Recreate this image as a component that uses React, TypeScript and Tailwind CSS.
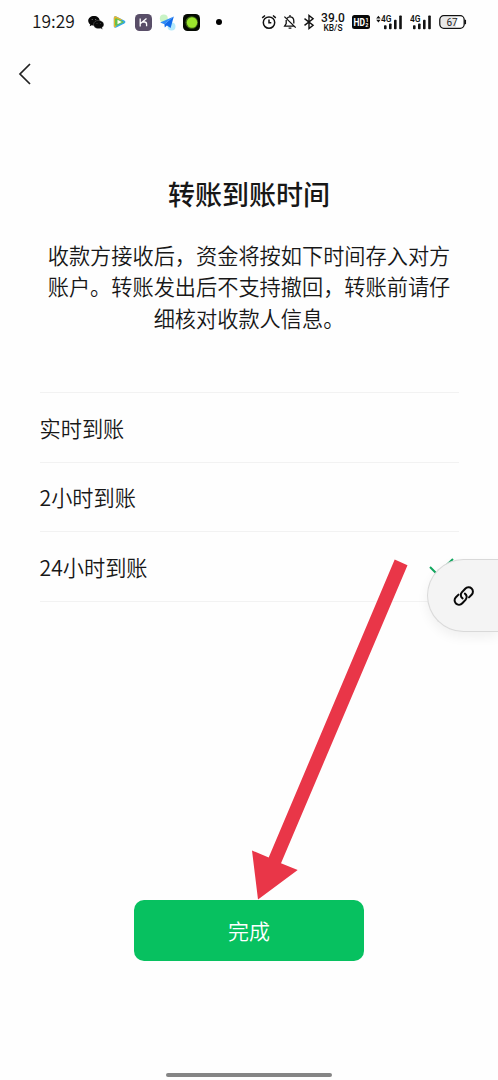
import type { ReactNode } from "react"

const options = ["实时到账", "2小时到账", "24小时到账"]

function SignalBars() {
  return (
    <svg className="h-4 w-[22px]" viewBox="0 0 22 16" fill="#111">
      <text x="0" y="8.2" fontSize="9.2" fontWeight="600" fontFamily="Roboto, sans-serif" textLength="10.5" lengthAdjust="spacingAndGlyphs">
        4G
      </text>
      <rect x="3" y="11.2" width="2.6" height="4" rx="0.8" />
      <rect x="8" y="9.4" width="2.6" height="5.8" rx="0.8" />
      <rect x="13" y="5.8" width="2.6" height="9.4" rx="0.8" />
      <rect x="18.2" y="1.4" width="2.6" height="13.8" rx="0.8" />
    </svg>
  )
}

function WeChatIcon() {
  return (
    <svg className="h-4 w-4" viewBox="0 0 16 16" fill="#080808">
      <path d="M6 2C2.7 2 .2 4.1.2 6.8c0 1.5.8 2.8 2 3.7L1.7 12.3l2-1c.8.2 1.5.3 2.3.3 3.3 0 5.7-2.1 5.7-4.8S9.3 2 6 2z" />
      <path
        d="M10.6 6.4c-2.9 0-5.1 1.8-5.1 4.1s2.2 4.1 5.1 4.1c.7 0 1.3-.1 1.9-.3l1.9.9-.5-1.6c1.2-.8 1.9-1.9 1.9-3.1 0-2.3-2.3-4.1-5.2-4.1z"
        stroke="#aaa"
        strokeWidth="0.3"
      />
      <circle cx="4.2" cy="5.4" r="0.5" fill="#999" />
      <circle cx="7.7" cy="5.4" r="0.5" fill="#999" />
      <circle cx="9" cy="9.4" r="0.4" fill="#888" />
      <circle cx="12.4" cy="9.4" r="0.4" fill="#888" />
    </svg>
  )
}

function VideoIcon() {
  return (
    <svg className="ml-[9px] h-3 w-[13px]" viewBox="0 0 13 12">
      <path d="M.8 2C.8.5 2 0 3.3.5l8 4c1.5.8 1.5 2.2 0 3l-8 4C1.8 12 .8 11.5.8 10z" fill="#35a8e8" />
      <path d="M.8 2C.8.5 2 0 3.3.5L9 3.4 2 11.5C1.2 11.4.8 10.8.8 10z" fill="#e9b52e" />
      <path d="M2 3.5C2 2.6 3 2 4 2.5l6 2.7c.8.5.8 1.1 0 1.6L4 9.6c-1 .4-2 0-2-.9z" fill="#66c04c" />
      <path d="M4.5 3.7L8.7 6 4.5 8.3z" fill="#fff" />
    </svg>
  )
}

function AppIcons() {
  return (
    <>
      <WeChatIcon />
      <VideoIcon />
      <svg className="ml-[9px] h-[17px] w-[17px]" viewBox="0 0 17 17" fill="none">
        <rect width="17" height="17" rx="4.5" fill="#594e68" />
        <path d="M5.2 4.5v8M5.5 9.5L11.5 4.6M7.8 8h1.8c1.5 0 2 1 2 2.2v2" stroke="#fff" strokeWidth="1.3" />
      </svg>
      <svg className="ml-[7px] h-[17px] w-[17px]" viewBox="0 0 17 17">
        <circle cx="4.8" cy="4.5" r="4" fill="#c9f3c5" />
        <circle cx="12.5" cy="12.5" r="4" fill="#b5e9fb" />
        <path d="M14.8 2.5L1.2 8.6l4.2 1.7z" fill="#2c8cf7" />
        <path d="M14.8 2.5L5.4 10.3l.4 3.3 2.1-2 3.7 2.5z" fill="#116bea" />
      </svg>
      <svg className="ml-[7px] h-[17px] w-[17px]" viewBox="0 0 17 17">
        <rect width="17" height="17" rx="4.5" fill="#050a02" />
        <circle cx="8.7" cy="8.5" r="6.3" fill="#416817" />
        <circle cx="9" cy="8.5" r="5.2" fill="#9be52d" />
      </svg>
      <span className="ml-4 h-[6px] w-[6px] rounded-full bg-black" />
    </>
  )
}

function SystemIcons() {
  return (
    <>
      <svg className="h-4 w-4" viewBox="0 0 16 16" fill="none" stroke="#111" strokeWidth="1.5">
        <circle cx="8" cy="8.6" r="5.7" />
        <path d="M8 5.5v3.3h2.3M1.2 3.9L4 1.5M12 1.5l2.8 2.4" />
      </svg>
      <svg className="ml-1.5 h-4 w-[14px]" viewBox="0 0 14 16" fill="none" stroke="#111" strokeWidth="1.3">
        <path d="M4 4.3C4.7 3.3 5.7 2.8 7 2.8c2.5 0 3.8 1.7 3.8 4.2v2.5M3.2 6v3.5L1.6 12.2h9.2M7 1v1.8M5.6 14.2h2.8M1.4 2.6l11.3 11" />
      </svg>
      <svg className="ml-1.5 h-4 w-3" viewBox="0 0 12 16" fill="none" stroke="#111" strokeWidth="1.4">
        <path d="M1.5 4.6l8.6 6.6L6 14.5v-13l4.1 3.3-8.6 6.6" />
      </svg>
      <div className="ml-[6px] flex w-6 flex-col items-center font-['Roboto'] text-[#111]">
        <span className="text-[12px] leading-[10px] font-medium">39.0</span>
        <svg className="mt-px h-[8px] w-5" viewBox="0 0 20 8" fill="#111">
          <text x="0.5" y="7" fontSize="8.4" fontWeight="500" fontFamily="Roboto, sans-serif" textLength="19" lengthAdjust="spacingAndGlyphs">
            KB/S
          </text>
        </svg>
      </div>
      <svg className="ml-[7px] h-[14px] w-[18px]" viewBox="0 0 18 14">
        <rect width="18" height="14" rx="2.5" fill="#080808" />
        <text x="1.5" y="10.7" fill="#fff" fontSize="10" fontWeight="700" fontFamily="Roboto, sans-serif" textLength="11.5" lengthAdjust="spacingAndGlyphs">
          HD
        </text>
        <text x="13.5" y="6.5" fill="#fff" fontSize="5.5" fontWeight="700" fontFamily="Roboto, sans-serif">
          1
        </text>
        <text x="13.2" y="11.8" fill="#fff" fontSize="5.5" fontWeight="700" fontFamily="Roboto, sans-serif">
          2
        </text>
      </svg>
      <svg className="ml-[6px] h-4 w-[5px]" viewBox="0 0 5 16" fill="#111">
        <path d="M.2 4.4L2.4 1.8l2.2 2.6zM.2 5.8l2.2 2.6 2.200-2.600z" />
      </svg>
      <SignalBars />
      <span className="w-[7px]" />
      <SignalBars />
      <svg className="ml-[7px] h-4 w-7" viewBox="0 0 28 16">
        <rect x="0.8" y="1.7" width="24.4" height="12.6" rx="4" fill="#fff" stroke="#111" strokeWidth="1.3" />
        <path d="M5 3h12v10H5a3 3 0 0 1-3-3V6a3 3 0 0 1 3-3z" fill="#e8e8e8" />
        <path d="M26.3 5.8v4.4" stroke="#111" strokeWidth="1.5" />
        <text x="13" y="11.6" textAnchor="middle" fill="#222" fontSize="10" fontWeight="400" fontFamily="Roboto, sans-serif">
          67
        </text>
      </svg>
    </>
  )
}

function StatusBar() {
  return (
    <div className="flex h-11 items-center pl-[32px]">
      <span className="w-[56px] pb-0.5 text-[17.4px] leading-none">19:29</span>
      <AppIcons />
      <span className="w-[39px]" />
      <SystemIcons />
    </div>
  )
}

function Option({ children, selected }: { children: ReactNode; selected?: boolean }) {
  return (
    <li className="flex h-[69.7px] items-center justify-between border-t border-[#f2f2f2] text-[21.2px]">
      <span>{children}</span>
      {selected && (
        <svg className="mr-[5px] h-5 w-[26px]" viewBox="0 0 26 20" fill="none" stroke="#12a75f" strokeWidth="2">
          <path d="M2 10l7 7L25 2" />
        </svg>
      )}
    </li>
  )
}

export default function App() {
  return (
    <div className="relative flex h-[1080px] w-[498px] flex-col overflow-hidden bg-[#fefefe] font-['Noto_Sans_CJK_SC',sans-serif] font-[350] text-[#171717]">
      <StatusBar />

      {/* Back */}
      <header className="flex h-[60px] items-center pl-[18px]">
        <button aria-label="返回">
          <svg className="h-6 w-[14px]" viewBox="0 0 14 24" fill="none" stroke="#222" strokeWidth="1.7">
            <path d="M12 2L2 12l10 10" />
          </svg>
        </button>
      </header>

      <main className="flex flex-1 flex-col px-[39.5px]">
        <h1 className="mt-[70px] text-center text-[27px] leading-10 font-medium">转账到账时间</h1>
        <p className="mt-[25px] text-center text-[21.2px] leading-[31.3px]">
          收款方接收后，资金将按如下时间存入对方
          <br />
          账户。转账发出后不支持撤回，转账前请仔
          <br />
          细核对收款人信息。
        </p>

        <ul className="mt-[59.2px] border-b border-[#f2f2f2]">
          {options.map((option, i) => (
            <Option key={option} selected={i === 2}>
              {option}
            </Option>
          ))}
        </ul>

        <button className="mt-auto mb-[119px] h-[61px] w-[230px] self-center rounded-[10px] bg-[#07c160] text-[21px] text-white">
          完成
        </button>
      </main>

      {/* Home indicator */}
      <div className="absolute bottom-[3px] left-[166px] h-1 w-[166px] rounded-full bg-[#858585]" />

      {/* Floating link handle */}
      <div className="absolute top-[559px] right-0 flex h-[73px] w-[71px] items-center rounded-l-full border border-r-0 border-[#d9d9d9] bg-[#f4f4f4] pl-[25px] shadow-[0_5px_12px_rgba(0,0,0,0.06)]">
        <svg className="h-[22px] w-[22px]" viewBox="0 0 22 22" fill="none" stroke="#080808" strokeWidth="2" strokeLinecap="round">
          <path d="M9.6 13.4C7.6 12 7.2 9.2 8.8 7.4l3.4-3.6c1.7-1.8 4.6-2 6.4-.3 1.800 1.700 1.700 4.600 0 6.300l-2.600 2.600" />
          <path d="M11.900 8.600c2 1.400 2.400 4.200.8 6l-3.400 3.600c-1.700 1.800-4.600 2-6.400.3-1.800-1.700-1.700-4.600 0-6.300l2.600-2.600" />
        </svg>
      </div>

      {/* Pointer arrow */}
      <svg className="pointer-events-none absolute inset-0 h-full w-full" viewBox="0 0 498 1080">
        <path d="M394.7 559.5L407.5 565.2 281 863.3 297.7 870 258 899.5 252 850.5 268.7 857.5z" fill="#e93648" />
      </svg>
    </div>
  )
}
